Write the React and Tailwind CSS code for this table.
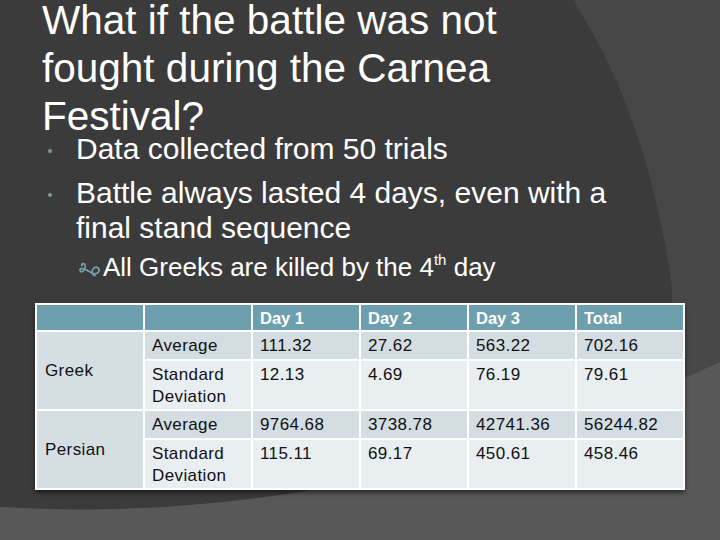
import React from 'react';

const rows = [
    { group: 'Greek', label: 'Average', values: ['111.32', '27.62', '563.22', '702.16'], shade: 'dark' },
    { group: 'Greek', label: 'Standard Deviation', values: ['12.13', '4.69', '76.19', '79.61'], shade: 'light' },
    { group: 'Persian', label: 'Average', values: ['9764.68', '3738.78', '42741.36', '56244.82'], shade: 'dark' },
    { group: 'Persian', label: 'Standard Deviation', values: ['115.11', '69.17', '450.61', '458.46'], shade: 'light' },
];

// background swooshes of the slide theme
const Backdrop = () => (
    <svg className="absolute inset-0" width="720" height="540" viewBox="0 0 720 540">
        <rect width="720" height="540" fill="#3b3b3b" />
        <path d="M573 0 Q650 120 672 290 L672 540 L720 540 L720 0 Z" fill="#474747" />
        <path d="M0 507 Q150 516 300 492 Q520 455 720 362 L720 540 L0 540 Z" fill="#585858" />
    </svg>
);

// wingdings-style curl used as the sub-bullet
const Curl = () => (
    <svg width="23" height="17" viewBox="0 0 22 16" className="shrink-0 mt-[9px]">
        <path
            d="M4 5 C2 2 7 1 7 5 C7 9 3 12 2 9 C1 6 6 7 9 9 C12 11 16 14 19 11 C22 8 18 4 15 7 C12 10 14 14 17 14"
            fill="none"
            stroke="#7aa2ac"
            strokeWidth="1.6"
        />
    </svg>
);

const Dot = () => <span className="block w-[4px] h-[4px] rounded-full bg-[#84959c]" />;

const App = () => {
    return (
        <div className="relative w-[720px] h-[540px] overflow-hidden text-white [font-family:'Liberation_Sans',Arial,sans-serif]">
            <Backdrop />
            <div className="relative">
                <h1 className="pl-[42px] -mt-[4px] text-[40.5px] leading-[48px] w-[570px]">
                    What if the battle was not fought during the Carnea Festival?
                </h1>

                <ul className="-mt-[9px]">
                    <li className="flex items-start text-[30px] leading-[35px]">
                        <span className="w-[76px] pl-[48px] pt-[18px]"><Dot /></span>
                        <span>Data collected from 50 trials</span>
                    </li>
                    <li className="flex items-start text-[30px] leading-[35px] mt-[9px]">
                        <span className="w-[76px] pl-[48px] pt-[18px]"><Dot /></span>
                        <span className="w-[540px]">Battle always lasted 4 days, even with a final stand sequence</span>
                    </li>
                    <li className="flex items-start pl-[78px] mt-[7px] text-[26px] leading-[30px]">
                        <Curl />
                        <span className="ml-[2px]">
                            All Greeks are killed by the 4<sup className="text-[15px] align-[4px] leading-none">th</sup> day
                        </span>
                    </li>
                </ul>

                <div className="ml-[35px] mt-[21px] w-[650px] shadow-[0_3px_4px_rgba(0,0,0,0.5)]">
                    <table className="border-separate border-spacing-[2px] bg-white text-[17px] leading-[22px] tracking-[0.4px] text-[#111]">
                        <thead>
                            <tr>
                                {['', '', 'Day 1', 'Day 2', 'Day 3', 'Total'].map((h, i) => (
                                    <th key={i} className="w-[106px] h-[25px] bg-[#6d9fae] text-left align-middle px-[7px] text-[16.5px] tracking-normal font-bold text-white">
                                        {h}
                                    </th>
                                ))}
                            </tr>
                        </thead>
                        <tbody>
                            {rows.map((row, i) => {
                                const bg = row.shade === 'dark' ? 'bg-[#d4dde2]' : 'bg-[#e9eef1]';
                                return (
                                    <tr key={i}>
                                        {i % 2 === 0 && (
                                            <td rowSpan={2} className="bg-[#d5dee3] align-middle px-[8px]">
                                                {row.group}
                                            </td>
                                        )}
                                        <td className={`${bg} align-top px-[7px] pt-[3px] ${row.shade === 'dark' ? 'h-[27px]' : 'h-[48px]'}`}>
                                            {row.label}
                                        </td>
                                        {row.values.map((v, j) => (
                                            <td key={j} className={`${bg} align-top px-[7px] pt-[3px]`}>
                                                {v}
                                            </td>
                                        ))}
                                    </tr>
                                );
                            })}
                        </tbody>
                    </table>
                </div>
            </div>
        </div>
    );
};

export default App;
